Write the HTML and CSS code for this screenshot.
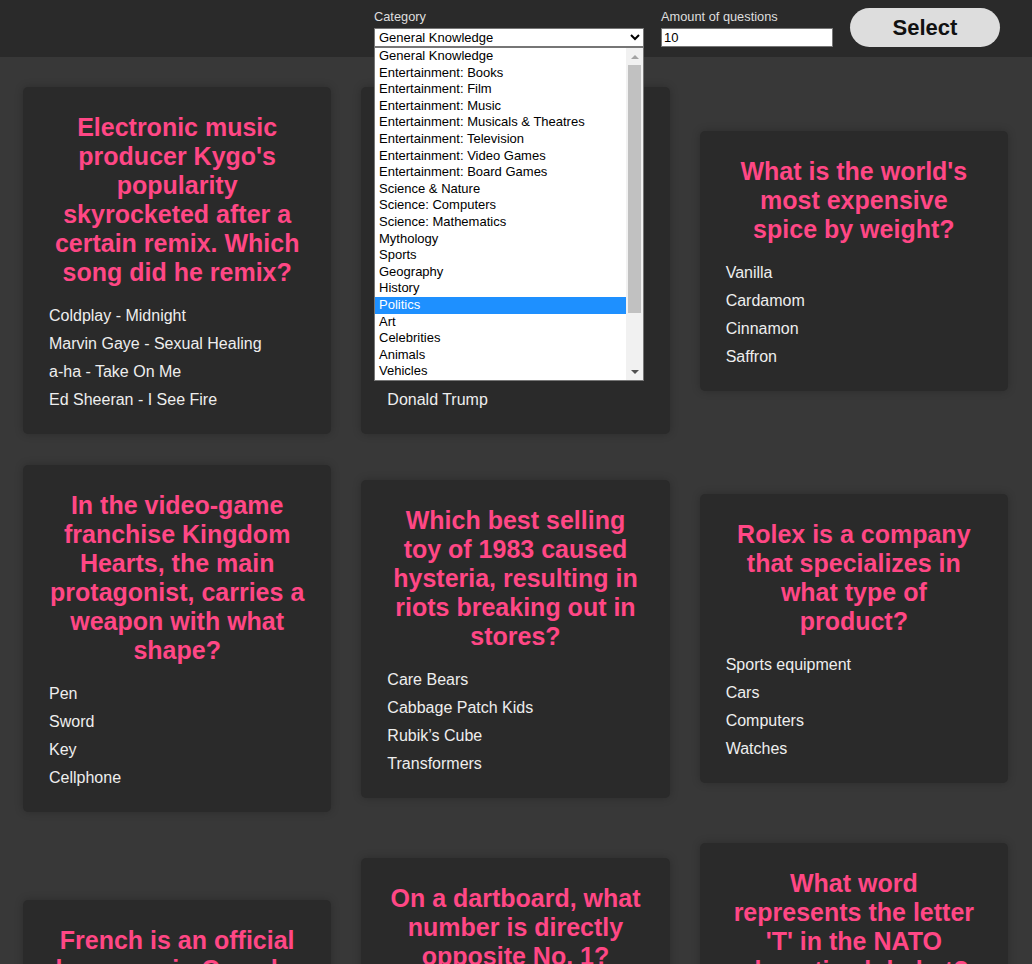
FILE: index.html
```html
<!DOCTYPE html>
<html lang="en">
<head>
<meta charset="utf-8">
<title>Trivia</title>
<link rel="stylesheet" href="styles.css">
</head>
<body>
<header class="topbar">
  <div class="field field-category">
    <label class="field-label" for="category">Category</label>
    <select id="category" class="category-select">
      <option>General Knowledge</option>
      <option>Entertainment: Books</option>
      <option>Politics</option>
    </select>
    <div class="dropdown">
      <ul class="dropdown-options">
        <li>General Knowledge</li>
        <li>Entertainment: Books</li>
        <li>Entertainment: Film</li>
        <li>Entertainment: Music</li>
        <li>Entertainment: Musicals &amp; Theatres</li>
        <li>Entertainment: Television</li>
        <li>Entertainment: Video Games</li>
        <li>Entertainment: Board Games</li>
        <li>Science &amp; Nature</li>
        <li>Science: Computers</li>
        <li>Science: Mathematics</li>
        <li>Mythology</li>
        <li>Sports</li>
        <li>Geography</li>
        <li>History</li>
        <li class="is-active">Politics</li>
        <li>Art</li>
        <li>Celebrities</li>
        <li>Animals</li>
        <li>Vehicles</li>
        <li>Entertainment: Comics</li>
        <li>Science: Gadgets</li>
        <li>Entertainment: Japanese Anime &amp; Manga</li>
        <li>Entertainment: Cartoon &amp; Animations</li>
      </ul>
      <div class="scrollbar">
        <div class="scroll-btn"><svg width="8" height="4" viewBox="0 0 8 4"><polygon points="0,4 4,0 8,4" fill="#a3a3a3"/></svg></div>
        <div class="scroll-track"><div class="scroll-thumb"></div></div>
        <div class="scroll-btn"><svg width="8" height="4" viewBox="0 0 8 4"><polygon points="0,0 8,0 4,4" fill="#505050"/></svg></div>
      </div>
    </div>
  </div>
  <div class="field field-amount">
    <label class="field-label" for="amount">Amount of questions</label>
    <input id="amount" class="amount-input" type="text" value="10">
  </div>
  <button class="select-btn" type="button">Select</button>
</header>

<main class="questions">
  <article class="card">
    <h2 class="card-question">Electronic music producer Kygo's popularity skyrocketed after a certain remix. Which song did he remix?</h2>
    <ul class="card-answers">
      <li>Coldplay - Midnight</li>
      <li>Marvin Gaye - Sexual Healing</li>
      <li>a-ha - Take On Me</li>
      <li>Ed Sheeran - I See Fire</li>
    </ul>
  </article>
  <article class="card">
    <h2 class="card-question">Which United States President was inducted into the celebrity wing of the WWE Hall of Fame in 2013?</h2>
    <ul class="card-answers">
      <li>Barack Obama</li>
      <li>George W. Bush</li>
      <li>Ronald Reagan</li>
      <li>Donald Trump</li>
    </ul>
  </article>
  <article class="card">
    <h2 class="card-question">What is the world's most expensive spice by weight?</h2>
    <ul class="card-answers">
      <li>Vanilla</li>
      <li>Cardamom</li>
      <li>Cinnamon</li>
      <li>Saffron</li>
    </ul>
  </article>

  <article class="card">
    <h2 class="card-question">In the video-game franchise Kingdom Hearts, the main protagonist, carries a weapon with what shape?</h2>
    <ul class="card-answers">
      <li>Pen</li>
      <li>Sword</li>
      <li>Key</li>
      <li>Cellphone</li>
    </ul>
  </article>
  <article class="card">
    <h2 class="card-question">Which best selling toy of 1983 caused hysteria, resulting in riots breaking out in stores?</h2>
    <ul class="card-answers">
      <li>Care Bears</li>
      <li>Cabbage Patch Kids</li>
      <li>Rubik’s Cube</li>
      <li>Transformers</li>
    </ul>
  </article>
  <article class="card">
    <h2 class="card-question">Rolex is a company that specializes in what type of product?</h2>
    <ul class="card-answers">
      <li>Sports equipment</li>
      <li>Cars</li>
      <li>Computers</li>
      <li>Watches</li>
    </ul>
  </article>

  <article class="card">
    <h2 class="card-question">French is an official language in Canada.</h2>
    <ul class="card-answers">
      <li>True</li>
      <li>False</li>
    </ul>
  </article>
  <article class="card">
    <h2 class="card-question">On a dartboard, what number is directly opposite No. 1?</h2>
    <ul class="card-answers">
      <li>20</li>
      <li>12</li>
      <li>15</li>
      <li>19</li>
    </ul>
  </article>
  <article class="card">
    <h2 class="card-question">What word represents the letter 'T' in the NATO phonetic alphabet?</h2>
    <ul class="card-answers">
      <li>Target</li>
      <li>Taxi</li>
      <li>Turkey</li>
      <li>Tango</li>
    </ul>
  </article>
</main>
</body>
</html>
```

FILE: styles.css
```css
html {
  scrollbar-width: none;
}

body {
  margin: 0;
  background: #383838;
  font-family: "Liberation Sans", Arial, sans-serif;
}

/* ---------- header ---------- */
.topbar {
  display: flex;
  justify-content: flex-end;
  align-items: flex-start;
  gap: 17px;
  height: 57px;
  box-sizing: border-box;
  padding: 8px 32px 0 0;
  background: #2a2a2a;
}

.field {
  display: flex;
  flex-direction: column;
  padding-top: 2px;
}

.field-category {
  width: 270px;
  position: relative;
}

.field-amount {
  width: 172px;
}

.field-label {
  font-size: 12.8px;
  line-height: 14px;
  color: #dedede;
  margin-bottom: 4px;
}

.category-select {
  box-sizing: border-box;
  width: 270px;
  height: 19px;
  margin: 0;
  padding: 0;
  font-family: "Liberation Sans", Arial, sans-serif;
  font-size: 13px;
  color: #000;
  background: #fff;
  border: 1px solid #767676;
  border-radius: 0;
}

.amount-input {
  box-sizing: border-box;
  width: 172px;
  height: 19px;
  margin: 0;
  padding: 0 2px;
  font-family: "Liberation Sans", Arial, sans-serif;
  font-size: 13px;
  color: #000;
  background: #fff;
  border: 1px solid #767676;
  border-radius: 0;
  outline: none;
}

.select-btn {
  width: 150px;
  height: 39px;
  margin: 0;
  padding: 1px 0 0;
  border: none;
  border-radius: 20px;
  background: #dddddd;
  color: #111;
  font-family: "Liberation Sans", Arial, sans-serif;
  font-size: 22px;
  font-weight: bold;
}

/* ---------- open select popup ---------- */
.dropdown {
  position: absolute;
  left: 0;
  top: 39px;
  z-index: 10;
  box-sizing: border-box;
  width: 270px;
  height: 334px;
  display: flex;
  background: #fff;
  border: 1px solid #767676;
}

.dropdown-options {
  flex: 1;
  min-width: 0;
  margin: 0;
  padding: 0;
  list-style: none;
  overflow: hidden;
}

.dropdown-options li {
  height: 16.6px;
  line-height: 16.6px;
  padding-left: 4px;
  font-size: 13px;
  color: #000;
  white-space: nowrap;
}

.dropdown-options li.is-active {
  background: #1e90ff;
  color: #fff;
}

.scrollbar {
  width: 17px;
  display: flex;
  flex-direction: column;
  background: #f1f1f1;
}

.scroll-btn {
  height: 17px;
  display: flex;
  align-items: center;
  justify-content: center;
}

.scroll-track {
  flex: 1;
  padding: 0 2px;
}

.scroll-thumb {
  height: 248px;
  background: #c1c1c1;
}

/* ---------- question cards ---------- */
.questions {
  display: grid;
  grid-template-columns: repeat(3, minmax(0, 1fr));
  column-gap: 30px;
  row-gap: 31px;
  align-items: center;
  padding: 30px 24px 30px 23px;
}

.card {
  background: #2a2a2a;
  border-radius: 5px;
  box-shadow: 0 0 8px rgba(0, 0, 0, 0.22);
  padding: 26px 26px 20px;
}

.card-question {
  margin: 0 0 15px;
  font-size: 25px;
  font-weight: bold;
  line-height: normal;
  color: #ff4785;
  text-align: center;
}

.card-answers {
  list-style: none;
  margin: 0;
  padding: 0;
  font-size: 16px;
  line-height: 28px;
  color: #eeeeee;
}
```
